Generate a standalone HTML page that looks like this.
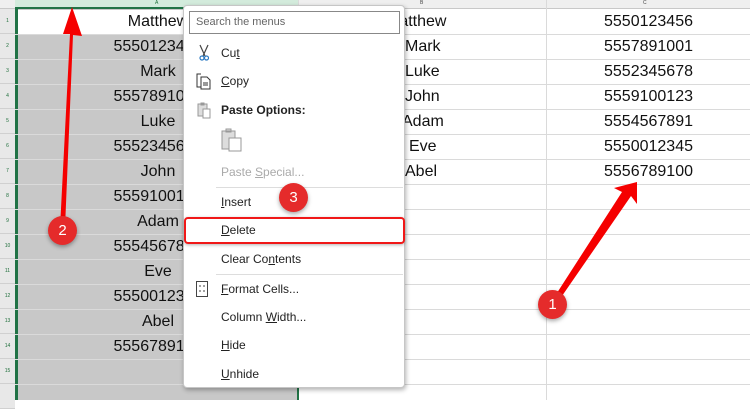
<!DOCTYPE html>
<html><head><meta charset="utf-8"><style>
*{margin:0;padding:0;box-sizing:border-box}
body{width:750px;height:400px;overflow:hidden;background:#fff;font-family:"Liberation Sans",sans-serif;position:relative}
.a{position:absolute}
.hr{position:absolute;left:0;width:15px;height:25px;font-size:5px;color:#1e6e3a;text-align:center;line-height:25px;background:#e8e8e8;border-bottom:1px solid #d0d0d0}
.rl{position:absolute;left:15px;width:735px;height:1px;background:#dadada}
.ca{position:absolute;left:18px;width:280px;text-align:center;font-size:16px;color:#111;height:25px;line-height:26px}
.cb{position:absolute;left:405px;font-size:16px;color:#111;line-height:26px}
.cc{position:absolute;left:547px;width:203px;text-align:center;font-size:16px;color:#111;line-height:26px}
.mi{position:absolute;left:221px;font-size:12px;color:#222}
.u{text-decoration:underline}
.ic{position:absolute;left:196px}
</style></head><body>
<!-- column headers -->
<div class="a" style="left:0;top:0;width:750px;height:9px;background:#efefef;border-bottom:1px solid #c8c8c8"></div>
<div class="a" style="left:15px;top:0;width:283px;height:9px;background:#d3ebdc;border-bottom:2px solid #217346"></div>
<div class="a" style="left:155px;top:0;font-size:5px;color:#1e6e3a">A</div>
<div class="a" style="left:420px;top:0;font-size:5px;color:#444">B</div>
<div class="a" style="left:643px;top:0;font-size:5px;color:#444">C</div>
<div class="a" style="left:546px;top:0;width:1px;height:400px;background:#dadada"></div>
<div class="a" style="left:298px;top:0;width:1px;height:400px;background:#dadada"></div>
<!-- col A selection -->
<div class="a" style="left:15px;top:9px;width:283px;height:391px;background:#c8c8c8"></div>
<div class="a" style="left:18px;top:10px;width:280px;height:24px;background:#fff"></div>
<div class="a" style="left:15px;top:9px;width:3px;height:391px;background:#217346"></div>
<div class="a" style="left:297px;top:9px;width:2px;height:391px;background:#217346"></div>
<!-- row headers & lines -->
<div class="hr" style="top:9px">1</div><div class="hr" style="top:34px">2</div><div class="hr" style="top:59px">3</div><div class="hr" style="top:84px">4</div><div class="hr" style="top:109px">5</div><div class="hr" style="top:134px">6</div><div class="hr" style="top:159px">7</div><div class="hr" style="top:184px">8</div><div class="hr" style="top:209px">9</div><div class="hr" style="top:234px">10</div><div class="hr" style="top:259px">11</div><div class="hr" style="top:284px">12</div><div class="hr" style="top:309px">13</div><div class="hr" style="top:334px">14</div><div class="hr" style="top:359px">15</div><div class="hr" style="top:384px"></div>
<div class="rl" style="top:34px"></div><div class="rl" style="top:59px"></div><div class="rl" style="top:84px"></div><div class="rl" style="top:109px"></div><div class="rl" style="top:134px"></div><div class="rl" style="top:159px"></div><div class="rl" style="top:184px"></div><div class="rl" style="top:209px"></div><div class="rl" style="top:234px"></div><div class="rl" style="top:259px"></div><div class="rl" style="top:284px"></div><div class="rl" style="top:309px"></div><div class="rl" style="top:334px"></div><div class="rl" style="top:359px"></div><div class="rl" style="top:384px"></div>
<!-- col A values -->
<div class="ca" style="top:9px">Matthew</div><div class="ca" style="top:34px">5550123456</div><div class="ca" style="top:59px">Mark</div><div class="ca" style="top:84px">5557891001</div><div class="ca" style="top:109px">Luke</div><div class="ca" style="top:134px">5552345678</div><div class="ca" style="top:159px">John</div><div class="ca" style="top:184px">5559100123</div><div class="ca" style="top:209px">Adam</div><div class="ca" style="top:234px">5554567891</div><div class="ca" style="top:259px">Eve</div><div class="ca" style="top:284px">5550012345</div><div class="ca" style="top:309px">Abel</div><div class="ca" style="top:334px">5556789100</div>
<!-- col B -->
<div class="cb" style="top:9px;left:386px">Matthew</div><div class="cb" style="top:34px">Mark</div><div class="cb" style="top:59px">Luke</div><div class="cb" style="top:84px">John</div><div class="cb" style="top:109px;left:402px">Adam</div><div class="cb" style="top:134px;left:409px">Eve</div><div class="cb" style="top:159px">Abel</div>
<!-- col C -->
<div class="cc" style="top:9px">5550123456</div><div class="cc" style="top:34px">5557891001</div><div class="cc" style="top:59px">5552345678</div><div class="cc" style="top:84px">5559100123</div><div class="cc" style="top:109px">5554567891</div><div class="cc" style="top:134px">5550012345</div><div class="cc" style="top:159px">5556789100</div>
<!-- menu -->
<div class="a" style="left:183px;top:5px;width:222px;height:383px;background:#fff;border:1px solid #c6c6c6;border-radius:4px;box-shadow:1px 2px 5px rgba(0,0,0,.3)"></div>
<div class="a" style="left:189px;top:11px;width:211px;height:23px;border:1px solid #888;font-size:11px;color:#666;padding:4px 0 0 6px">Search the menus</div>
<svg class="ic" style="top:44px" width="16" height="18" viewBox="0 0 16 18"><path d="M4 1 L9 12 M12 1 L7 12" stroke="#444" stroke-width="1.2" fill="none"/><circle cx="6" cy="14" r="2" fill="none" stroke="#2b79c2" stroke-width="1.2"/><circle cx="10.5" cy="14" r="2" fill="none" stroke="#2b79c2" stroke-width="1.2"/></svg>
<div class="mi" style="top:46px">Cu<span class="u">t</span></div>
<svg class="ic" style="top:72px" width="18" height="18" viewBox="0 0 18 18"><path d="M5 2H1V15H5M5 5V17H14V8L11 5Z" fill="none" stroke="#333"/><path d="M7 11H12M7 13H12" stroke="#333"/></svg>
<div class="mi" style="top:74px"><span class="u">C</span>opy</div>
<svg class="ic" style="top:101px" width="18" height="18" viewBox="0 0 18 18"><path d="M2 3H11V15H2Z M5 2H8V4H5Z" fill="#ddd" stroke="#999"/><path d="M7 8H14V17H7Z" fill="#fff" stroke="#999"/></svg>
<div class="mi" style="top:103px;font-weight:bold">Paste Options:</div>
<svg class="a" style="left:221px;top:128px" width="22" height="24" viewBox="0 0 22 24"><path d="M1 3H14V21H1Z M5 1H10V4H5Z" fill="#ddd" stroke="#999"/><path d="M8 10H20V23H8Z" fill="#fff" stroke="#999"/></svg>
<div class="mi" style="top:165px;color:#aaa">Paste <span class="u">S</span>pecial...</div>
<div class="a" style="left:216px;top:187px;width:187px;height:1px;background:#ddd"></div>
<div class="mi" style="top:195px"><span class="u">I</span>nsert</div>
<div class="a" style="left:184px;top:217px;width:221px;height:27px;border:2px solid #f01818;border-radius:4px;box-shadow:0 1px 3px rgba(0,0,0,.3)"></div>
<div class="mi" style="top:223px"><span class="u">D</span>elete</div>
<div class="mi" style="top:252px">Clear Co<span class="u">n</span>tents</div>
<div class="a" style="left:216px;top:274px;width:187px;height:1px;background:#ddd"></div>
<svg class="ic" style="top:281px" width="12" height="16" viewBox="0 0 12 16"><rect x="0.5" y="0.5" width="11" height="15" fill="none" stroke="#444"/><path d="M3 5H5M3 10H5M7 5H9M7 10H9" stroke="#444"/></svg>
<div class="mi" style="top:282px"><span class="u">F</span>ormat Cells...</div>
<div class="mi" style="top:310px">Column <span class="u">W</span>idth...</div>
<div class="mi" style="top:338px"><span class="u">H</span>ide</div>
<div class="mi" style="top:367px"><span class="u">U</span>nhide</div>
<!-- arrows -->
<svg class="a" style="left:0;top:0" width="750" height="400">
<polygon points="60,228 65,228 73,35 82,36 72,7 63,34 70,34" fill="#f50000"/>
<polygon points="555,296 562,296 631,196 637,204 637,182 614,188 622,192" fill="#f50000"/>
</svg>
<div class="a" style="left:48px;top:216px;width:29px;height:29px;border-radius:50%;background:#e52b2b;box-shadow:0 2px 4px rgba(0,0,0,.35);color:#fff;font-size:15px;text-align:center;line-height:29px">2</div>
<div class="a" style="left:279px;top:183px;width:29px;height:29px;border-radius:50%;background:#e52b2b;box-shadow:0 2px 4px rgba(0,0,0,.35);color:#fff;font-size:15px;text-align:center;line-height:29px">3</div>
<div class="a" style="left:538px;top:290px;width:29px;height:29px;border-radius:50%;background:#e52b2b;box-shadow:0 2px 4px rgba(0,0,0,.35);color:#fff;font-size:15px;text-align:center;line-height:29px">1</div>
</body></html>
